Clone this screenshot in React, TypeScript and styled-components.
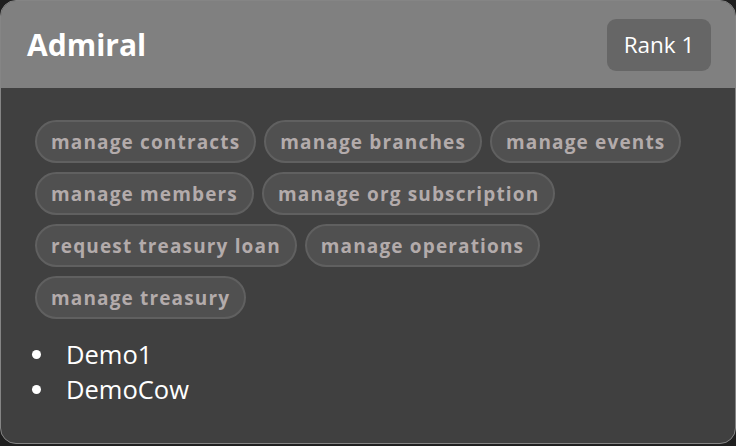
import React from "react";
import styled, { createGlobalStyle } from "styled-components";

const Global = createGlobalStyle`
  html, body { margin: 0; padding: 0; background: #1f1f1f; }
  body { font-family: "Open Sans", "Noto Sans", sans-serif; }
`;

const Card = styled.div`
  width: 736px;
  height: 444px;
  box-sizing: border-box;
  border: 1px solid #858585;
  border-radius: 16px;
  overflow: hidden;
  background: #404040;
  display: flex;
  flex-direction: column;
`;

const Header = styled.div`
  height: 87px;
  background: #808080;
  display: flex;
  align-items: center;
  justify-content: space-between;
  padding: 0 24px 0 26px;
  flex-shrink: 0;
`;

const Title = styled.h2`
  margin: 0;
  color: #fff;
  font-size: 30px;
  font-weight: 700;
  letter-spacing: 0;
`;

const Badge = styled.div`
  width: 104px;
  height: 52px;
  box-sizing: border-box;
  border-radius: 9px;
  background: #666666;
  color: #fff;
  font-size: 22.5px;
  display: flex;
  align-items: center;
  justify-content: center;
`;

const Body = styled.div`
  padding: 32px 27px 0 27px;
`;

const Chips = styled.div`
  display: flex;
  flex-wrap: wrap;
  gap: 9px 8px;
  padding-left: 7px;
  max-width: 660px;
`;

const Chip = styled.span`
  height: 43px;
  box-sizing: border-box;
  display: inline-flex;
  align-items: center;
  padding: 0 14px 0 14px;
  border: 2px solid #606060;
  border-radius: 22px;
  background: #505050;
  color: #b3abab;
  font-size: 19px;
  font-weight: 700;
  letter-spacing: 1.15px;
  white-space: nowrap;
`;

const List = styled.ul`
  margin: 18px 0 0 0;
  padding-left: 29px;
  color: #fff;
  font-size: 25.5px;
  line-height: 35px;
`;

const Item = styled.li`
  padding-left: 9px;
`;

const perms = [
  "manage contracts",
  "manage branches",
  "manage events",
  "manage members",
  "manage org subscription",
  "request treasury loan",
  "manage operations",
  "manage treasury",
];

export default function App() {
  return (
    <>
      <Global />
      <Card>
        <Header>
          <Title>Admiral</Title>
          <Badge>Rank 1</Badge>
        </Header>
        <Body>
          <Chips>
            {perms.map((p) => (
              <Chip key={p}>{p}</Chip>
            ))}
          </Chips>
          <List>
            <Item>Demo1</Item>
            <Item>DemoCow</Item>
          </List>
        </Body>
      </Card>
    </>
  );
}
